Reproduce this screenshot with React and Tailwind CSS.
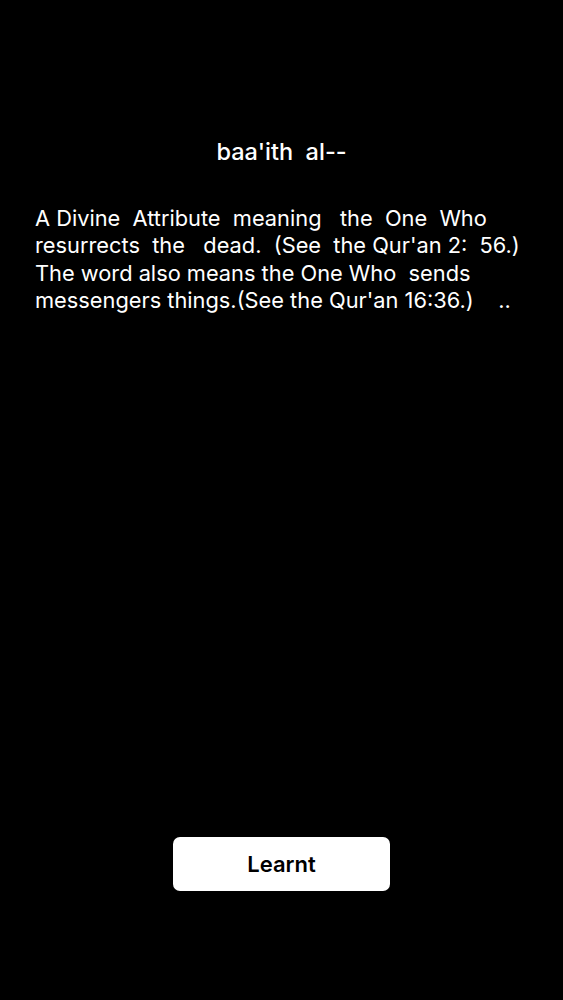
import React from 'react';

const LINES = [
  'A Divine  Attribute  meaning   the  One  Who',
  'resurrects  the   dead.  (See  the Qur\'an 2:  56.)',
  'The word also means the One Who  sends',
  'messengers things.(See the Qur\'an 16:36.)    ..',
];

export default function App() {
  return (
    <div
      className="flex h-[1000px] w-full flex-col bg-black text-white"
      style={{ fontFamily: 'Inter, "Noto Sans", sans-serif' }}
    >
      <h1 className="mt-[137px] whitespace-pre text-center text-[23.5px] font-medium leading-[30px]">
        baa'ith  al--
      </h1>

      <div className="mt-[38px] px-[35px] text-[21.8px] leading-[27.3px]">
        {LINES.map((line) => (
          <div key={line} className="whitespace-pre">{line}</div>
        ))}
      </div>

      <div className="mt-auto mb-[109px] flex justify-center">
        <button
          type="button"
          className="h-[54px] w-[217px] rounded-[7px] bg-white text-[22px] font-semibold text-black"
        >
          Learnt
        </button>
      </div>
    </div>
  );
}
